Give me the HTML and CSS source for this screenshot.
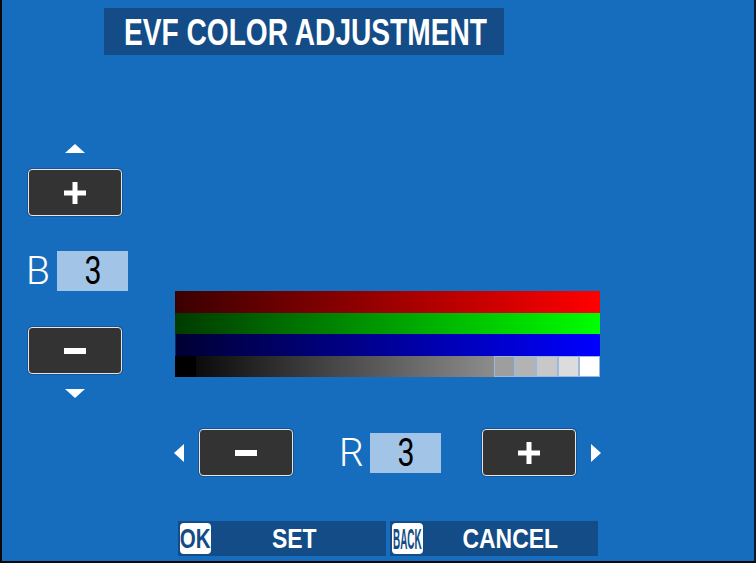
FILE: index.html
```html
<!DOCTYPE html>
<html>
<head>
<meta charset="utf-8">
<link rel="stylesheet" href="styles.css">
</head>
<body>
<div class="screen">
  <div class="title"><span class="title-text">EVF COLOR ADJUSTMENT</span></div>
  <div class="main">
    <div class="vcol">
      <svg class="tri-v" width="20" height="9" viewBox="0 0 20 9"><polygon points="10,0 20,9 0,9" fill="#fff"/></svg>
      <div class="btn btn-first">
        <svg width="22" height="22" viewBox="0 0 22 22"><rect x="8.5" y="0" width="5" height="22" fill="#fff"/><rect x="0" y="8.5" width="22" height="5" fill="#fff"/></svg>
      </div>
      <div class="valrow vrow-b">
        <span class="lbl">B</span><span class="val"><span class="val-text">3</span></span>
      </div>
      <div class="btn btn-minus">
        <svg width="22" height="6" viewBox="0 0 22 6"><rect x="0" y="0" width="22" height="6" fill="#fff"/></svg>
      </div>
      <svg class="tri-v tri-down" width="20" height="9" viewBox="0 0 20 9"><polygon points="0,0 20,0 10,9" fill="#fff"/></svg>
    </div>
    <div class="right">
      <div class="bars">
        <div class="bar red"></div>
        <div class="bar green"></div>
        <div class="bar blue"></div>
        <div class="bar gray">
          <span class="blk"></span>
          <span class="grad"></span>
          <span class="step s1"></span>
          <span class="step s2"></span>
          <span class="step s3"></span>
          <span class="step s4"></span>
          <span class="step s5"></span>
        </div>
      </div>
      <div class="hrow">
        <svg class="tri-h" width="10" height="18" viewBox="0 0 10 18"><polygon points="10,0 10,18 0,9" fill="#fff"/></svg>
        <div class="btn hbtn-minus">
          <svg width="22" height="6" viewBox="0 0 22 6"><rect x="0" y="0" width="22" height="6" fill="#fff"/></svg>
        </div>
        <div class="valrow vrow-r">
          <span class="lbl">R</span><span class="val"><span class="val-text">3</span></span>
        </div>
        <div class="btn hbtn-plus">
          <svg width="22" height="22" viewBox="0 0 22 22"><rect x="8.5" y="0" width="5" height="22" fill="#fff"/><rect x="0" y="8.5" width="22" height="5" fill="#fff"/></svg>
        </div>
        <svg class="tri-h tri-right" width="10" height="18" viewBox="0 0 10 18"><polygon points="0,0 10,9 0,18" fill="#fff"/></svg>
      </div>
    </div>
  </div>
  <div class="footer">
    <div class="fitem">
      <span class="badge"><span class="badge-text ok">OK</span></span>
      <span class="flabel flabel-set"><span class="flabel-text">SET</span></span>
    </div>
    <div class="fitem">
      <span class="badge"><span class="badge-text back">BACK</span></span>
      <span class="flabel"><span class="flabel-text">CANCEL</span></span>
    </div>
  </div>
</div>
</body>
</html>
```
FILE: styles.css
```css
html, body {
  margin: 0;
  padding: 0;
  background: #ffffff;
}
body {
  width: 756px;
  height: 579px;
  overflow: hidden;
}
.screen {
  box-sizing: border-box;
  width: 756px;
  height: 563px;
  background: #166dbd;
  border-left: 2px solid #0a0a0a;
  border-right: 2px solid #0a1a2a;
  border-bottom: 2px solid #0a0a0a;
  display: flex;
  flex-direction: column;
  font-family: "Liberation Sans", Arial, sans-serif;
}
.title {
  margin-top: 8px;
  margin-left: 102px;
  width: 400px;
  height: 47px;
  background: #134c86;
  display: flex;
  align-items: center;
  padding-left: 20px;
  box-sizing: border-box;
}
.title-text {
  display: inline-block;
  color: #fff;
  font-weight: bold;
  font-size: 37px;
  line-height: 36px;
  transform: scaleX(0.76);
  transform-origin: left center;
  white-space: nowrap;
  margin-top: 2px;
}
.main {
  display: flex;
  align-items: flex-start;
}
.vcol {
  margin-left: 26px;
  margin-top: 89px;
  width: 94px;
  display: flex;
  flex-direction: column;
  align-items: center;
}
.tri-v { display: block; }
.btn {
  box-sizing: border-box;
  width: 94px;
  height: 47px;
  background: #333333;
  border: 1.5px solid #e6e6e6;
  border-radius: 4px;
  box-shadow: 0 0 0 1px rgba(10, 40, 80, 0.35);
  display: flex;
  align-items: center;
  justify-content: center;
}
.btn svg { display: block; }
.btn-first { margin-top: 16px; }
.btn-minus { margin-top: 36px; }
.tri-down { margin-top: 15px; }
.valrow {
  display: flex;
  align-items: center;
  height: 40px;
}
.vrow-b {
  margin-top: 35px;
  align-self: flex-start;
  margin-left: -2px;
}
.lbl {
  width: 31px;
  color: #fff;
  font-family: Roboto, "Liberation Sans", sans-serif;
  font-weight: 300;
  font-size: 39px;
  line-height: 40px;
}
.val {
  width: 71px;
  height: 40px;
  background: #a2c5e7;
  display: flex;
  align-items: center;
  justify-content: center;
}
.val-text {
  display: inline-block;
  color: #000;
  font-family: Roboto, "Liberation Sans", sans-serif;
  font-weight: 400;
  font-size: 39px;
  line-height: 40px;
  transform: scaleX(0.78);
}
.right {
  margin-left: 53px;
  margin-top: 236px;
  display: flex;
  flex-direction: column;
}
.bars {
  width: 425px;
  display: flex;
  flex-direction: column;
}
.bar {
  height: 21.5px;
}
.red { background: linear-gradient(to right, #3a0000, #ff0000); }
.green { background: linear-gradient(to right, #003a00, #00ff00); }
.blue {
  background: linear-gradient(to right, #000033, #0000ff);
  box-shadow: inset 1px 0 0 #0a2a6a;
}
.gray {
  display: flex;
}
.blk {
  width: 21px;
  background: #000;
}
.grad {
  width: 298px;
  background: linear-gradient(to right, #0b0b0b, #8c8c8c);
}
.step {
  flex: 1;
  box-sizing: border-box;
  border: 1px solid #9db8d8;
}
.s1 { background: #9e9e9e; }
.s2 { background: #b3b3b3; }
.s3 { background: #c8c8c8; }
.s4 { background: #dcdcdc; }
.s5 { background: #ffffff; }
.hrow {
  margin-top: 52px;
  margin-left: -1px;
  height: 47px;
  display: flex;
  align-items: center;
}
.tri-h { display: block; }
.hbtn-minus { margin-left: 15px; }
.vrow-r { margin-left: 46px; }
.hbtn-plus { margin-left: 41px; }
.tri-right { margin-left: 15px; }
.footer {
  margin-top: auto;
  margin-bottom: 5px;
  margin-left: 176px;
  display: flex;
  gap: 4px;
}
.fitem {
  width: 208px;
  height: 35px;
  background: #134c86;
  display: flex;
  align-items: center;
}
.badge {
  margin-left: 2px;
  width: 31px;
  height: 31px;
  flex: none;
  background: #fff;
  border-radius: 4px;
  display: flex;
  align-items: center;
  justify-content: center;
}
.badge-text {
  display: inline-block;
  flex: none;
  color: #134c86;
  font-weight: bold;
  line-height: 24px;
  white-space: nowrap;
}
.badge-text.ok {
  font-size: 27px;
  transform: scaleX(0.76);
}
.badge-text.back {
  font-size: 30px;
  transform: scaleX(0.33);
}
.flabel {
  flex: 1;
  text-align: center;
}
.flabel-set { padding-right: 8px; }
.flabel-text {
  display: inline-block;
  color: #fff;
  font-weight: bold;
  font-size: 27px;
  line-height: 30px;
  transform: scaleX(0.85);
  white-space: nowrap;
}
```
